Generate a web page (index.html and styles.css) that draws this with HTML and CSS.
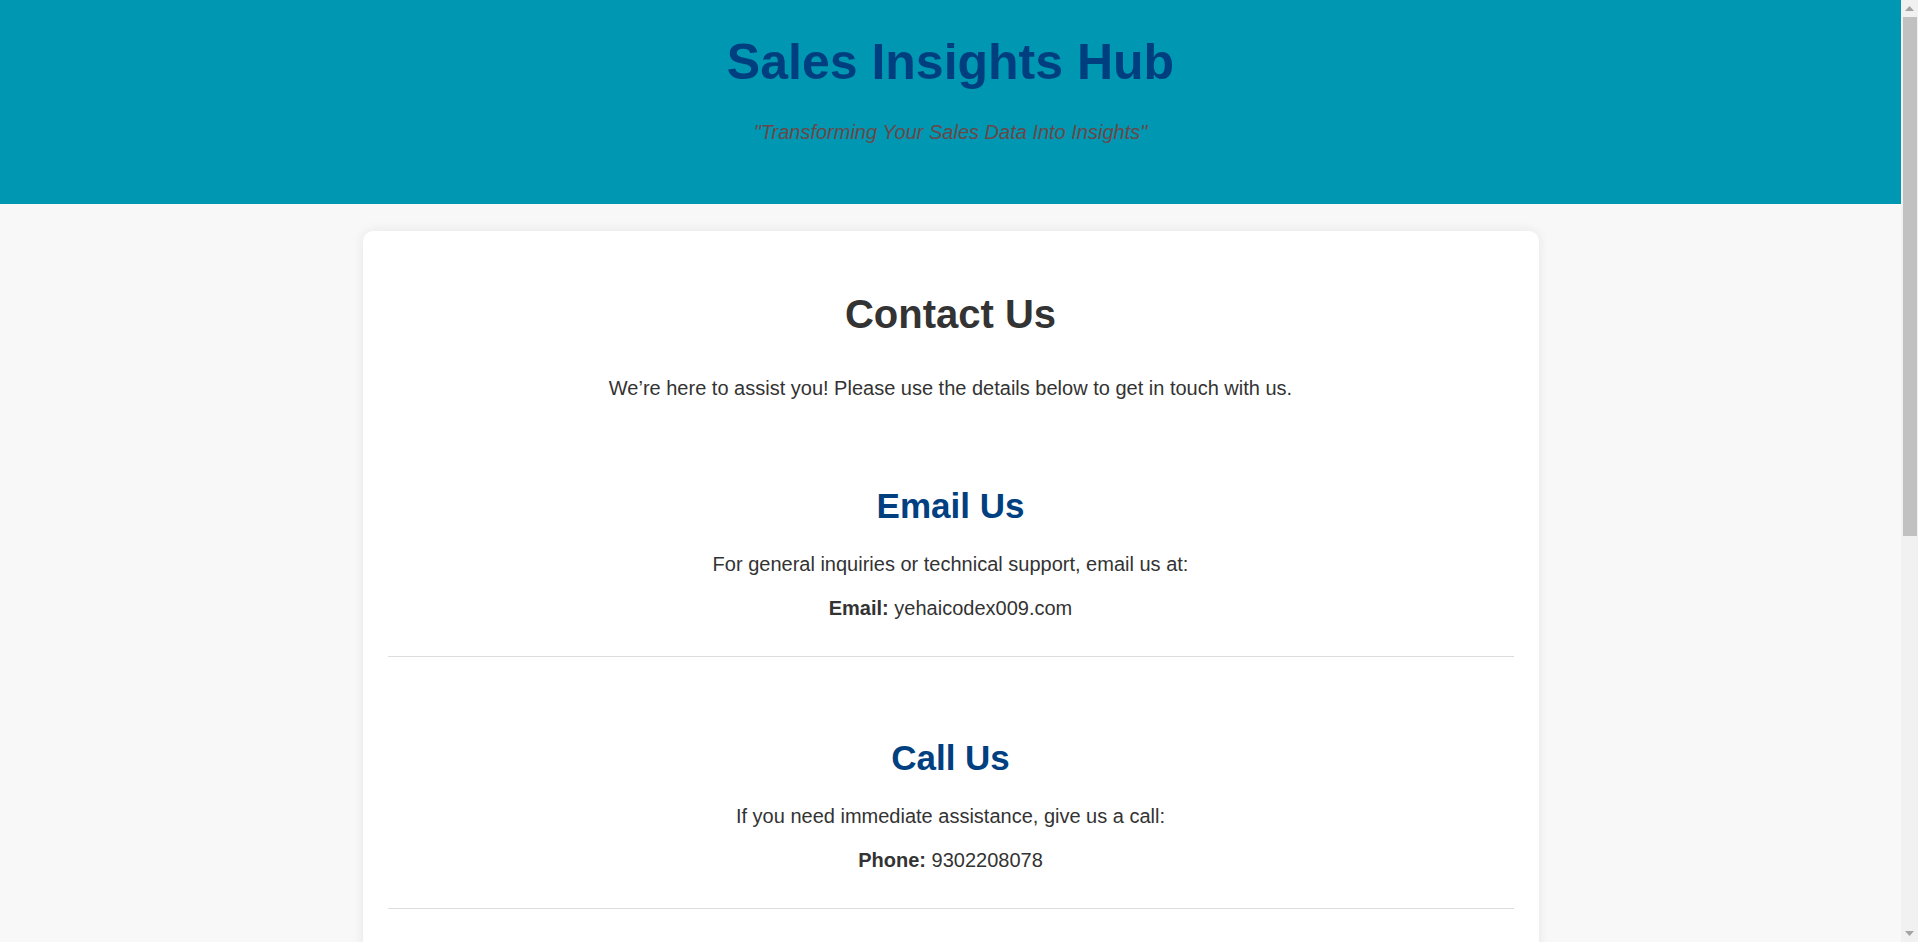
FILE: index.html
```html
<!DOCTYPE html>
<html lang="en">
<head>
<meta charset="utf-8">
<title>Contact Us - Sales Insights Hub</title>
<link rel="stylesheet" href="styles.css">
</head>
<body>
<header class="site-header">
  <h1 class="site-title">Sales Insights Hub</h1>
  <p class="site-tagline">"Transforming Your Sales Data Into Insights"</p>
</header>
<main class="page">
  <section class="card">
    <h2 class="card-title">Contact Us</h2>
    <p class="card-intro">We’re here to assist you! Please use the details below to get in touch with us.</p>

    <div class="contact-block">
      <h3 class="block-title">Email Us</h3>
      <p class="block-text">For general inquiries or technical support, email us at:</p>
      <p class="block-text"><strong>Email:</strong> yehaicodex009.com</p>
    </div>

    <div class="contact-block">
      <h3 class="block-title">Call Us</h3>
      <p class="block-text">If you need immediate assistance, give us a call:</p>
      <p class="block-text"><strong>Phone:</strong> 9302208078</p>
    </div>

    <div class="contact-block">
      <h3 class="block-title">Visit Us</h3>
      <p class="block-text">You can also visit our office during business hours:</p>
      <p class="block-text"><strong>Address:</strong> Sales Insights Hub, India</p>
    </div>

    <div class="contact-block">
      <h3 class="block-title">Business Hours</h3>
      <p class="block-text">Our team is available at the following times:</p>
      <p class="block-text"><strong>Hours:</strong> Monday – Friday, 9:00 AM – 6:00 PM</p>
    </div>
  </section>
</main>
<footer class="site-footer">
  <p class="footer-text">© 2024 Sales Insights Hub. All rights reserved.</p>
</footer>
<div class="fake-scrollbar" aria-hidden="true">
  <div class="sb-button sb-up"><svg width="9" height="5" viewBox="0 0 9 5"><path d="M0 5 L4.5 0 L9 5 Z" fill="#a3a3a3"/></svg></div>
  <div class="sb-thumb"></div>
  <div class="sb-rest"></div>
  <div class="sb-button sb-down"><svg width="9" height="5" viewBox="0 0 9 5"><path d="M0 0 L4.5 5 L9 0 Z" fill="#a3a3a3"/></svg></div>
</div>
</body>
</html>
```

FILE: styles.css
```css
body {
  margin: 0;
  padding-right: 17px;
  background: #f8f8f8;
  color: #333333;
  font-family: "Liberation Sans", Arial, Helvetica, sans-serif;
}

.site-header {
  background: #0097b2;
  text-align: center;
  padding: 32px 20px 60px;
}

.site-title {
  margin: 0;
  font-size: 50px;
  line-height: 60px;
  font-weight: bold;
  color: #003f7f;
}

.site-tagline {
  margin: 28px 0 0;
  font-size: 20px;
  line-height: 24px;
  font-style: italic;
  color: #6b4848;
}

.page {
  padding: 27px 20px 30px;
}

.card {
  box-sizing: border-box;
  max-width: 1176px;
  margin: 0 auto;
  background: #ffffff;
  border-radius: 10px;
  box-shadow: 0 0 12px rgba(0, 0, 0, 0.08);
  padding: 25px 25px 40px;
  text-align: center;
}

.card-title {
  margin: 34px 0 0;
  font-size: 40px;
  line-height: 48px;
  font-weight: bold;
  color: #333333;
}

.card-intro {
  margin: 38px 0 45px;
  font-size: 20px;
  line-height: 24px;
}

.contact-block {
  padding: 40px 0 36px;
  border-bottom: 1px solid #dddddd;
}

.contact-block + .contact-block {
  margin-top: 40px;
}

.block-title {
  margin: 0;
  font-size: 35px;
  line-height: 42px;
  font-weight: bold;
  color: #004080;
}

.block-text {
  margin: 20px 0 0;
  font-size: 20px;
  line-height: 24px;
}

.block-title + .block-text {
  margin-top: 25px;
}

.site-footer {
  background: #0097b2;
  text-align: center;
  padding: 20px;
}

.footer-text {
  margin: 0;
  font-size: 16px;
  color: #ffffff;
}

/* visual stand-in for the browser's classic scrollbar */
.fake-scrollbar {
  position: fixed;
  top: 0;
  right: 0;
  bottom: 0;
  width: 17px;
  background: #f1f1f1;
  display: flex;
  flex-direction: column;
}

.sb-button {
  height: 17px;
  flex: 0 0 17px;
  display: flex;
  align-items: center;
  justify-content: center;
}

.sb-thumb {
  flex: 0 0 519px;
  margin: 0 1px 0 2px;
  background: #c1c1c1;
}

.sb-rest {
  flex: 1 1 auto;
}
```
